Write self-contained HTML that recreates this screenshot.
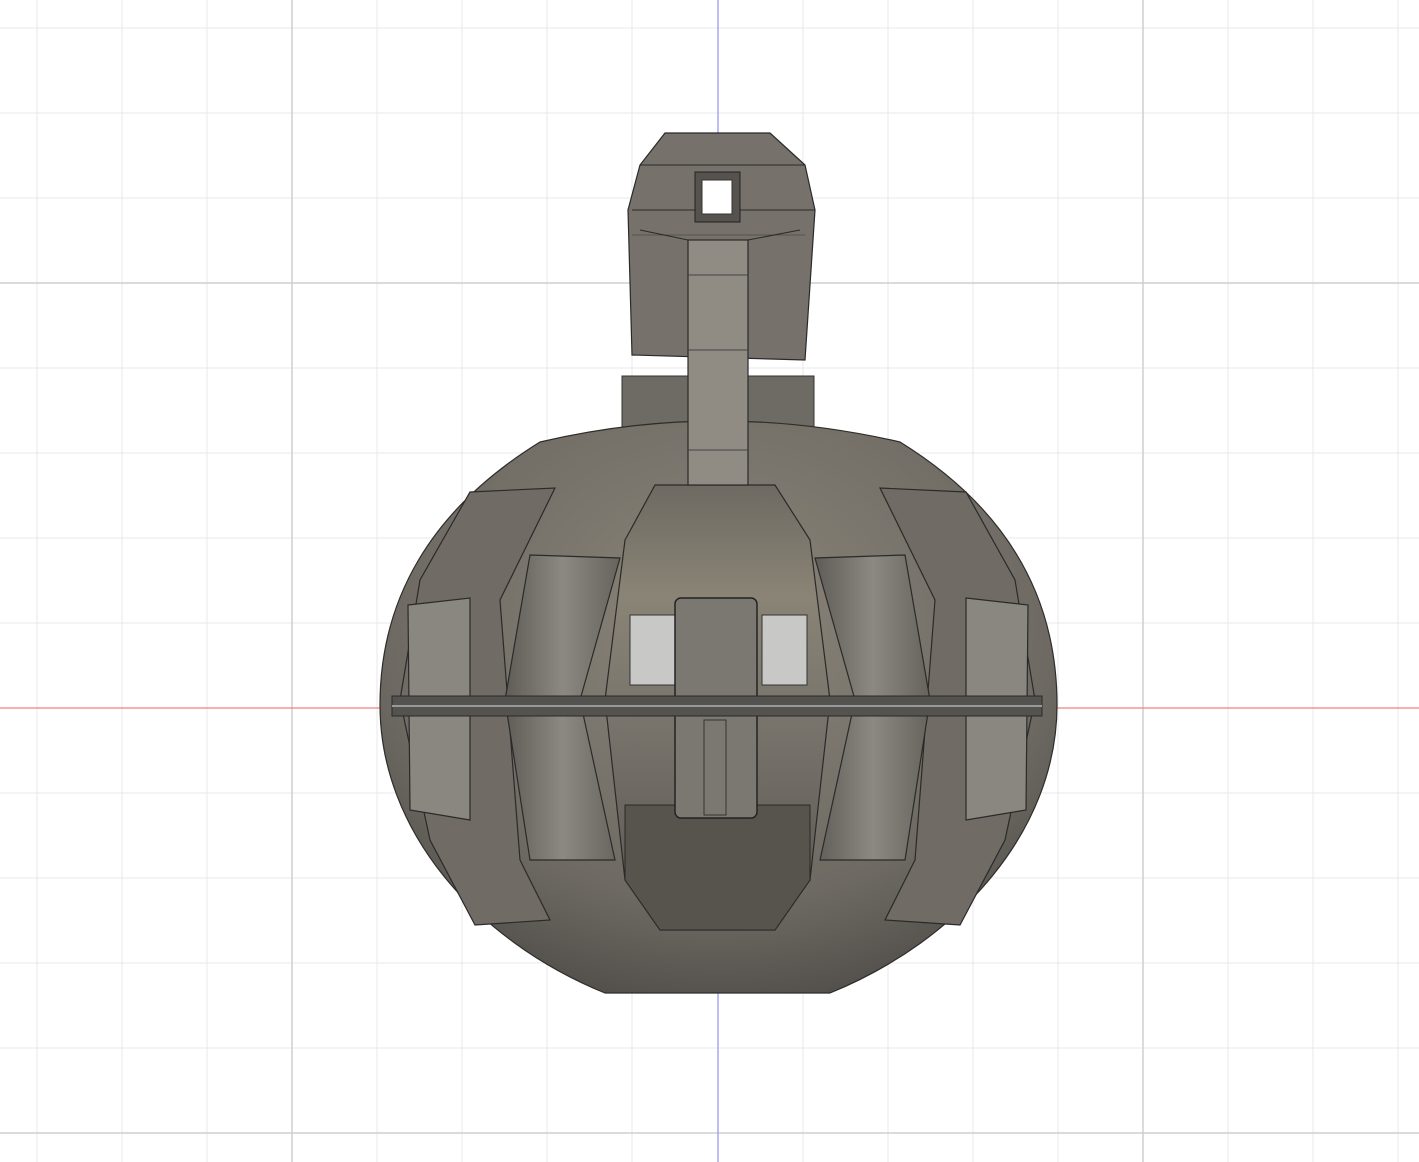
<!DOCTYPE html>
<html><head><style>html,body{margin:0;padding:0;background:#fff;width:1419px;height:1162px;overflow:hidden}</style></head>
<body>
<svg width="1419" height="1162" viewBox="0 0 1419 1162" xmlns="http://www.w3.org/2000/svg">
<defs>
<linearGradient id="body" x1="0" y1="0" x2="0" y2="1">
<stop offset="0" stop-color="#6e6a62"/><stop offset="0.25" stop-color="#8a8476"/><stop offset="0.55" stop-color="#77736b"/><stop offset="1" stop-color="#5a5650"/></linearGradient>
<radialGradient id="sph" cx="0.5" cy="0.35" r="0.7">
<stop offset="0" stop-color="#8b8579"/><stop offset="0.7" stop-color="#6e6a63"/><stop offset="1" stop-color="#4f4c48"/></radialGradient>
<linearGradient id="pan" x1="0" y1="0" x2="1" y2="0">
<stop offset="0" stop-color="#5f5c57"/><stop offset="0.5" stop-color="#8c8982"/><stop offset="1" stop-color="#66635d"/></linearGradient>
</defs>
<rect width="1419" height="1162" fill="#fff"/>
<g stroke="#e8e8ea" stroke-width="1">
<path d="M37 0V1162M122 0V1162M207 0V1162M377 0V1162M462 0V1162M547 0V1162M632 0V1162M803 0V1162M888 0V1162M973 0V1162M1058 0V1162M1228 0V1162M1313 0V1162M1398 0V1162"/>
<path d="M0 28H1419M0 113H1419M0 198H1419M0 368H1419M0 453H1419M0 538H1419M0 623H1419M0 793H1419M0 878H1419M0 963H1419M0 1048H1419"/>
</g>
<g stroke="#cfcfd3" stroke-width="1.5"><path d="M292 0V1162M1143 0V1162M0 283H1419M0 1133H1419"/></g>
<path d="M0 708H1419" stroke="#f08080" stroke-width="1.2"/>
<path d="M718 0V1162" stroke="#a8a8f0" stroke-width="1.5"/>
<!-- collar -->
<rect x="622" y="376" width="192" height="55" fill="#6e6b65" stroke="#333" stroke-width="1"/>
<!-- sphere -->
<path d="M540 442 Q718 400 900 442 C1010 510 1057 600 1057 705 C1057 830 960 940 830 993 L605 993 C475 940 380 830 380 705 C380 600 430 510 540 442Z" fill="url(#sph)" stroke="#2e2d2b" stroke-width="1.2"/>
<!-- side outer ribs -->
<g fill="#706c65" stroke="#2a2a2a" stroke-width="1.2">
<path d="M470 492 L555 488 L500 600 L520 860 L550 920 L475 925 L430 840 L400 700 L420 580Z"/>
<path d="M966 492 L880 488 L935 600 L915 860 L885 920 L960 925 L1005 840 L1035 700 L1015 580Z" />
<path d="M408 605 L470 598 L470 820 L410 810Z" fill="#8a8780"/>
<path d="M966 598 L1028 605 L1026 810 L966 820Z" fill="#8a8780"/>
</g>
<!-- mid panels -->
<g fill="url(#pan)" stroke="#2a2a2a" stroke-width="1.2">
<path d="M530 555 L620 558 L580 700 L615 860 L530 860 L505 700Z"/>
<path d="M905 555 L815 558 L855 700 L820 860 L905 860 L930 700Z"/>
</g>
<!-- center panel -->
<path d="M655 485 L775 485 L810 540 L830 700 L810 880 L775 930 L660 930 L625 880 L605 700 L625 540Z" fill="url(#body)" stroke="#2a2a2a" stroke-width="1.2"/>
<rect x="630" y="615" width="45" height="70" fill="#c8c8c6" stroke="#333"/>
<rect x="762" y="615" width="45" height="70" fill="#c8c8c6" stroke="#333"/>
<path d="M625 805 L810 805 L810 880 L775 930 L660 930 L625 880Z" fill="#57534d" stroke="#2a2a2a"/>
<rect x="675" y="598" width="82" height="220" rx="6" fill="#7b7872" stroke="#222" stroke-width="1.5"/>
<rect x="704" y="720" width="22" height="95" fill="none" stroke="#333"/>
<!-- band -->
<rect x="392" y="696" width="650" height="20" fill="#555350" stroke="#2a2a2a"/>
<path d="M392 706H1042" stroke="#999" stroke-width="2"/>
<!-- head -->
<path d="M665 133 L770 133 L805 165 L815 210 L805 360 L632 355 L628 210 L640 165Z" fill="#76726b" stroke="#2a2a2a" stroke-width="1.2"/>
<path d="M640 165 L805 165 M632 210 L815 210" stroke="#2a2a2a"/>
<path d="M632 235 L805 235" stroke="#55524d"/>
<rect x="695" y="172" width="45" height="50" fill="#56534f" stroke="#222"/>
<rect x="702" y="180" width="30" height="34" fill="#fff" stroke="#333"/>
<path d="M640 230 L688 240 M800 230 L748 240" stroke="#2a2a2a"/>
<!-- neck -->
<rect x="688" y="240" width="60" height="245" fill="#908c84" stroke="#2a2a2a" stroke-width="1.2"/>
<path d="M688 275H748M688 350H748M688 450H748" stroke="#444"/>
</svg>
</body></html>
